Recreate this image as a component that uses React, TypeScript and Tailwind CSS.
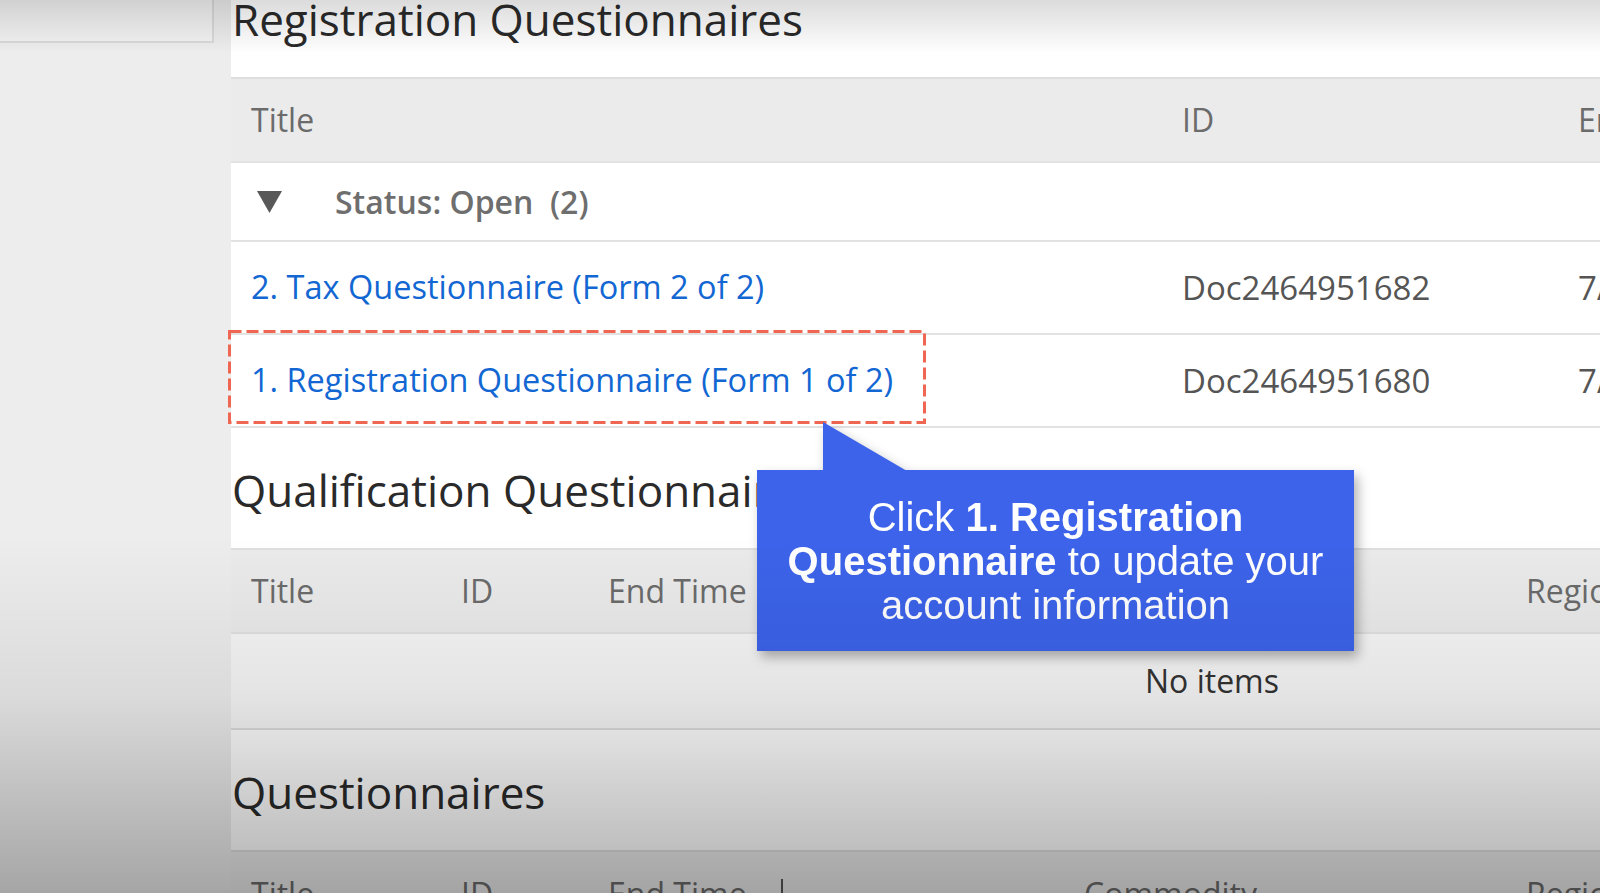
import React from 'react';

const font = { fontFamily: '"Open Sans", "Noto Sans", sans-serif' };

const SectionHeading: React.FC<{ title: string }> = ({ title }) => (
  <div className="h-[122px] shrink-0 bg-white border-b-2 border-[#dedede] pl-[1px] pt-[40px]">
    <h2 className="text-[44px] leading-none text-[#2a2a2a]">{title}</h2>
  </div>
);

const HeaderRow: React.FC<{ cols: { label: string; w: string }[] }> = ({ cols }) => (
  <div className="h-[84px] shrink-0 bg-[#ebebeb] border-b-2 border-[#e2e2e2] flex items-center pl-[20px] text-[32px] text-[#6b6b6b]">
    {cols.map((c) => (
      <div key={c.label} className={`${c.w} shrink-0`}>{c.label}</div>
    ))}
  </div>
);

const App: React.FC = () => {
  const docs = [
    { title: '2. Tax Questionnaire (Form 2 of 2)', id: 'Doc2464951682' },
    { title: '1. Registration Questionnaire (Form 1 of 2)', id: 'Doc2464951680' },
  ];

  const smallCols = [
    { label: 'Title', w: 'w-[210px]' },
    { label: 'ID', w: 'w-[147px]' },
    { label: 'End Time', w: 'w-[476px]' },
    { label: 'Commodity', w: 'w-[442px]' },
    { label: 'Region', w: 'w-[300px]' },
  ];

  return (
    <div className="relative w-[1600px] h-[893px] overflow-hidden bg-[#ededed] flex" style={font}>
      {/* left nav stub */}
      <div className="w-[231px] shrink-0">
        <div className="w-[214px] h-[43px] bg-[#f3f3f3] border-r-2 border-b-2 border-[#dadada]" />
      </div>

      {/* main content, wider than the viewport */}
      <div className="flex-1 overflow-hidden">
        <div className="w-[1962px] flex flex-col -mt-[43px]">
          <SectionHeading title="Registration Questionnaires" />

          <HeaderRow cols={[{ label: 'Title', w: 'w-[931px]' }, { label: 'ID', w: 'w-[396px]' }, { label: 'End Time', w: 'w-[300px]' }]} />

          {/* group row */}
          <div className="h-[79px] shrink-0 bg-white border-b-2 border-[#e2e2e2] flex items-center pl-[26px] text-[32px] font-semibold text-[#6e6e6e]">
            <svg width="25" height="22" viewBox="0 0 25 22" className="shrink-0">
              <path d="M0 0 H25 L12.5 22 Z" fill="#585858" />
            </svg>
            <span className="ml-[53px]">Status: Open&nbsp;&nbsp;(2)</span>
          </div>

          {docs.map((d) => (
            <div key={d.id} className="h-[93px] shrink-0 bg-white border-b-2 border-[#e2e2e2] flex items-center pl-[20px]">
              <div className="w-[931px] shrink-0 text-[32.5px] text-[#1267d3]">{d.title}</div>
              <div className="w-[396px] shrink-0 text-[33px] text-[#555555]">{d.id}</div>
              <div className="text-[33px] text-[#555555]">7/18/2023</div>
            </div>
          ))}

          <SectionHeading title="Qualification Questionnaires" />
          <HeaderRow cols={smallCols} />
          <div className="h-[96px] shrink-0 bg-[#f7f7f7] border-b-2 border-[#dedede] flex items-center justify-center text-[32px] text-[#333333]">
            No items
          </div>

          <SectionHeading title="Questionnaires" />
          <div className="h-[84px] shrink-0 bg-[#ebebeb] flex items-center pl-[20px] text-[32px] text-[#6b6b6b]">
            <div className="w-[210px] shrink-0">Title</div>
            <div className="w-[147px] shrink-0">ID</div>
            <div className="w-[175px] shrink-0 flex items-center justify-between">
              <span className="whitespace-nowrap">End Time</span>
              <span className="w-[2px] h-[30px] bg-[#555555] shrink-0" />
            </div>
            <div className="w-[301px] shrink-0" />
            <div className="w-[442px] shrink-0">Commodity</div>
            <div className="shrink-0">Region</div>
          </div>
        </div>
      </div>

      {/* dashed highlight around the target link */}
      <svg className="absolute left-[228px] top-[330px] pointer-events-none" width="698" height="94" viewBox="0 0 698 94">
        <rect x="1.5" y="1.5" width="695" height="91" fill="none" stroke="#ef6752" strokeWidth="3" strokeDasharray="12 5" />
      </svg>

      {/* guided tour callout */}
      <div className="absolute left-[757px] top-[422px] flex flex-col drop-shadow-[4px_6px_6px_rgba(0,0,0,0.3)]">
        <svg width="150" height="49" viewBox="0 0 150 49" className="ml-[66px] -mb-px">
          <path d="M0 0 L84 49 H0 Z" fill="#3c63ea" />
        </svg>
        <div
          className="w-[597px] h-[181px] bg-[#3c63ea] flex items-center justify-center text-center text-white text-[40px] leading-[44px]"
          style={{ fontFamily: '"Liberation Sans", Arial, sans-serif' }}
        >
          <p>
            Click <b>1. Registration Questionnaire</b> to update your account information
          </p>
        </div>
      </div>

      {/* video vignette */}
      <div className="absolute inset-0 pointer-events-none bg-[linear-gradient(to_bottom,rgba(0,0,0,0.14)_0%,rgba(0,0,0,0)_6%,rgba(0,0,0,0)_60%,rgba(0,0,0,0.08)_78%,rgba(0,0,0,0.3)_100%)]" />
    </div>
  );
};

export default App;
